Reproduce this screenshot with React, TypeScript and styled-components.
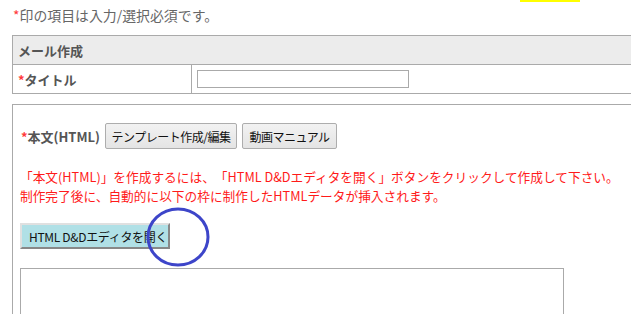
import React from "react";
import styled, { createGlobalStyle } from "styled-components";

const GlobalStyle = createGlobalStyle`
  html, body {
    margin: 0;
    padding: 0;
    overflow: hidden;
    background: #ffffff;
  }
  body {
    font-family: "Noto Sans CJK JP", "Noto Sans", sans-serif;
    font-size: 13px;
    color: #666666;
    text-spacing-trim: space-all;
  }
`;

const Page = styled.div`
  width: 640px;
  padding-left: 12px;
`;

const Marker = styled.div`
  width: 60px;
  height: 2px;
  margin-left: 508px;
  background: #ffff00;
`;

const Note = styled.p`
  margin: 0;
  padding: 3px 0 0 1px;
  height: 30px;
  line-height: 20px;
  font-size: 13.9px;
  color: #666666;
`;

const Req = styled.span`
  color: #ff3b3b;
`;

const FormTable = styled.table`
  width: 630px;
  border-collapse: collapse;
  border: 1px solid #aaaaaa;
`;

const HeadCell = styled.th`
  height: 28px;
  padding: 0 5px;
  background: #ececec;
  border: 1px solid #aaaaaa;
  text-align: left;
  font-weight: bold;
  font-size: 13px;
  color: #555555;
`;

const LabelCell = styled.th`
  width: 168px;
  height: 28px;
  padding: 0 5px;
  border: 1px solid #aaaaaa;
  text-align: left;
  font-weight: bold;
  font-size: 13px;
  color: #555555;
`;

const FieldCell = styled.td`
  padding: 0 5px;
  border: 1px solid #aaaaaa;
`;

const TextInput = styled.input`
  display: block;
  box-sizing: border-box;
  width: 212px;
  height: 18px;
  margin: 0;
  border: 1px solid #aaaaaa;
`;

const BodyBox = styled.div`
  margin-top: 10px;
  width: 620px;
  padding: 18px 0 40px 7px;
  border: 1px solid #aaaaaa;
`;

const LabelRow = styled.div`
  display: flex;
  align-items: center;
  gap: 5px;
`;

const BodyLabel = styled.span`
  padding-left: 1px;
  font-weight: bold;
  font-size: 13px;
  color: #555555;
`;

const PlainButton = styled.button<{ $w: number }>`
  box-sizing: border-box;
  width: ${(p) => p.$w}px;
  height: 26px;
  padding: 0;
  border: 1px solid #adadad;
  border-radius: 2px;
  background: linear-gradient(#f2f2f2, #e4e4e4);
  font-family: "Noto Sans CJK JP", sans-serif;
  font-size: 12px;
  letter-spacing: -0.5px;
  color: #111111;
  white-space: nowrap;
`;

const Info = styled.div`
  margin-top: 19px;
  font-size: 12.7px;
  color: #ff1a1a;
  white-space: nowrap;
`;

const InfoLine = styled.div`
  height: 18.5px;
  line-height: 18.5px;
`;

const EditorWrap = styled.div`
  position: relative;
  width: 150px;
  margin-top: 18px;
`;

const EditorButton = styled.button`
  box-sizing: border-box;
  display: block;
  width: 150px;
  height: 26px;
  padding: 0 0 0 7px;
  text-align: left;
  background: #b0e0e6;
  border-style: solid;
  border-width: 2px;
  border-color: #e0e0e0 #888888 #888888 #e0e0e0;
  font-family: "Noto Sans CJK JP", sans-serif;
  font-size: 12px;
  letter-spacing: -0.3px;
  color: #111111;
  white-space: nowrap;
`;

const Circle = styled.svg`
  position: absolute;
  left: 126px;
  top: -16px;
  width: 64px;
  height: 60px;
  overflow: visible;
`;

const HtmlArea = styled.textarea`
  display: block;
  box-sizing: border-box;
  width: 544px;
  height: 120px;
  margin-top: 19px;
  border: 1px solid #aaaaaa;
  resize: none;
`;

export default function App() {
  return (
    <>
      <GlobalStyle />
      <Page>
        <Marker />
        <Note>
          <Req>*</Req>印の項目は入力/選択必須です。
        </Note>
        <FormTable>
          <tbody>
            <tr>
              <HeadCell colSpan={2}>メール作成</HeadCell>
            </tr>
            <tr>
              <LabelCell>
                <Req>*</Req>タイトル
              </LabelCell>
              <FieldCell>
                <TextInput type="text" />
              </FieldCell>
            </tr>
          </tbody>
        </FormTable>
        <BodyBox>
          <LabelRow>
            <BodyLabel>
              <Req>*</Req>本文(HTML)
            </BodyLabel>
            <PlainButton $w={132}>テンプレート作成/編集</PlainButton>
            <PlainButton $w={95}>動画マニュアル</PlainButton>
          </LabelRow>
          <Info>
            <InfoLine>
              「本文(HTML)」を作成するには、「HTML D&amp;Dエディタを開く」ボタンをクリックして作成して下さい。
            </InfoLine>
            <InfoLine>制作完了後に、自動的に以下の枠に制作したHTMLデータが挿入されます。</InfoLine>
          </Info>
          <EditorWrap>
            <EditorButton>HTML D&amp;Dエディタを開く</EditorButton>
            <Circle viewBox="0 0 64 60">
              <ellipse cx="32" cy="30" rx="30" ry="28" fill="none" stroke="#3d45c9" strokeWidth="3" />
            </Circle>
          </EditorWrap>
          <HtmlArea />
        </BodyBox>
      </Page>
    </>
  );
}
